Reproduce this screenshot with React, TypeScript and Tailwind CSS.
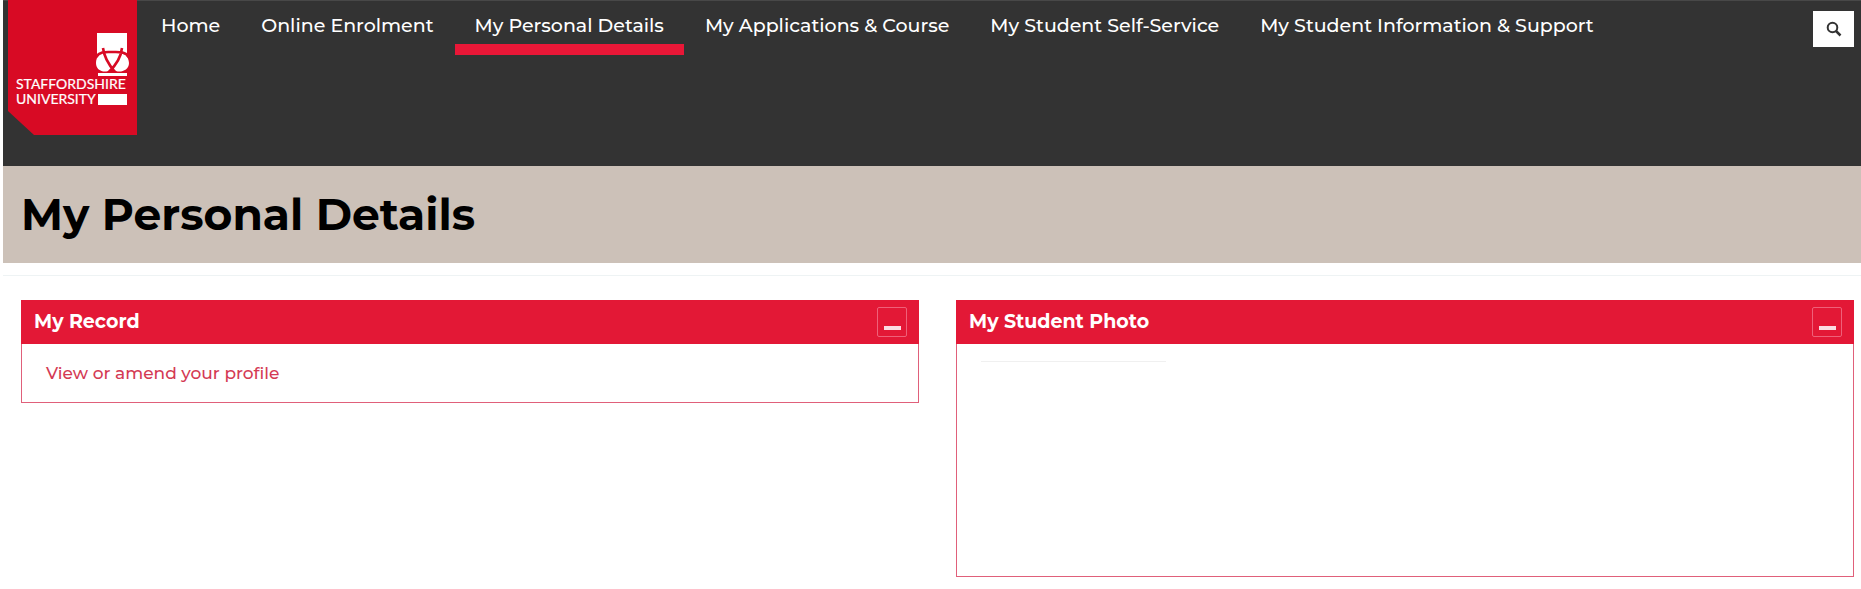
import React, { useState } from 'react';
import clsx from 'clsx';

const navItems = [
  'Home',
  'Online Enrolment',
  'My Personal Details',
  'My Applications & Course',
  'My Student Self-Service',
  'My Student Information & Support',
];

function Logo() {
  return (
    <svg viewBox="0 0 129 135" className="w-[129px] h-[135px] block" role="img" aria-label="Staffordshire University">
      <path d="M0 0H129V135H26L0 111Z" fill="#d80a24" />
      <path d="M89 33H119V56H89Z" fill="#fff" />
      <path d="M90 73H119V76H90Z" fill="#fff" />
      {/* Stafford knot */}
      <path d="M104 53C95 51 88 55 88 63C88 70 95 73 100 71L104 69L108 71C113 73 121 70 121 63C121 55 113 51 104 53Z" fill="#fff" />
      <path
        d="M88 57C92 51 98 52 104 52C110 52 117 51 121 57M95 48C96 57 101 65 107 72M114 48C113 57 108 65 101 72"
        fill="none"
        stroke="#d80a24"
        strokeWidth="2.600"
      />
      <g fill="#fff" stroke="#fff" strokeWidth="0.200" fontSize="14" fontFamily="Lato, sans-serif">
        <text x="8" y="89">STAFFORDSHIRE</text>
        <text x="8" y="104">UNIVERSITY</text>
      </g>
      <path d="M90 94H119V105H90Z" fill="#fff" />
    </svg>
  );
}

interface PanelProps {
  title: string;
  children: React.ReactNode;
}

function Panel({ title, children }: PanelProps) {
  const [open, setOpen] = useState(true);

  return (
    <section className="border border-[#e0607a]">
      <header className="h-11 -mx-px -mt-px pl-[13px] pr-3 flex items-center justify-between bg-[#e31836]">
        <h2 className="text-[19px] leading-6 font-bold text-white">{title}</h2>
        <button
          type="button"
          onClick={() => setOpen(!open)}
          aria-label={open ? 'Collapse' : 'Expand'}
          className="w-[30px] h-[30px] pb-1.5 flex items-end justify-center border border-[#ef6079] rounded-xs"
        >
          <span className="w-[17px] h-1 bg-[#fbdce2]" />
        </button>
      </header>
      {open && children}
    </section>
  );
}

export default function App() {
  const [active, setActive] = useState('My Personal Details');

  return (
    <div className="pl-[3px] bg-white font-[Montserrat,Inter,sans-serif]">
      <header className="h-[166px] pl-[5px] pr-[7px] flex items-start bg-[#333333] border-t border-[#484848]">
        <a href="#" className="-mt-px shrink-0">
          <Logo />
        </a>
        <nav className="flex flex-1 gap-px ml-1">
          {navItems.map((item) => (
            <a
              key={item}
              href="#"
              onClick={() => setActive(item)}
              className={clsx(
                'h-[54px] px-5 pt-[13px] border-b-11 text-[19px] leading-6 font-medium text-white whitespace-nowrap',
                active === item ? 'border-[#e91737]' : 'border-transparent'
              )}
            >
              {item}
            </a>
          ))}
        </nav>
        <button type="button" aria-label="Search" className="mt-2.5 w-[41px] h-9 shrink-0 flex items-center justify-center bg-white">
          <svg viewBox="0 0 16 16" className="w-4 h-4" fill="none" stroke="#333333" strokeWidth="2">
            <circle cx="6.500" cy="6.500" r="4.800" />
            <path d="M10 10L14.500 14.500" strokeWidth="2.500" />
          </svg>
        </button>
      </header>

      <div className="px-[18px] pt-5 pb-[21px] bg-[#ccc1b8]">
        <h1 className="text-[44px] leading-[56px] font-bold text-black">My Personal Details</h1>
      </div>
      <hr className="mt-3 border-[#eef3f4]" />

      <main className="grid grid-cols-2 items-start gap-x-[37px] pl-[18px] pr-[7px] pt-6 pb-3">
        <Panel title="My Record">
          <div className="px-6 py-[17px]">
            <a href="#" className="block text-[17px] leading-6 font-medium text-[#d43a54]">View or amend your profile</a>
          </div>
        </Panel>
        <Panel title="My Student Photo">
          <div className="h-[232px] px-6 pt-[17px]">
            <hr className="w-[185px] border-[#f0f0f0]" />
          </div>
        </Panel>
      </main>
    </div>
  );
}
